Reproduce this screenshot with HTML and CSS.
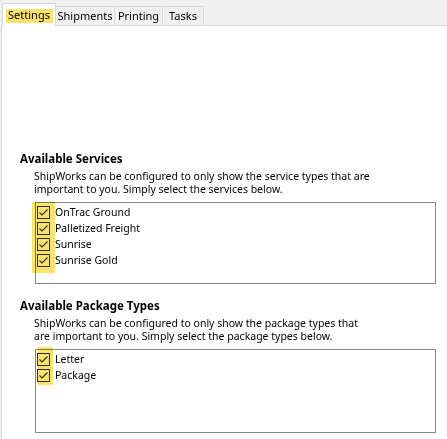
FILE: index.html
```
<!DOCTYPE html>
<html>
<head>
<meta charset="utf-8">
<link rel="stylesheet" href="styles.css">
</head>
<body>
<div class="tabs">
  <div class="tab active tab-settings"><span class="hl hl-tab"></span>Settings</div>
  <div class="tab tab-shipments">Shipments</div>
  <div class="tab tab-printing">Printing</div>
  <div class="tab tab-tasks">Tasks</div>
</div>
<div class="panel">
  <div class="section first">
    <div class="title">Available Services</div>
    <div class="desc">ShipWorks can be configured to only show the service types that are<br>important to you. Simply select the services below.</div>
    <div class="list list-services">
      <span class="hl hl-services"></span>
      <div class="item"><svg class="cb" width="13" height="13" viewBox="0 0 13 13"><rect x="0.5" y="0.5" width="12" height="12" fill="#fff" stroke="#333"/><path d="M2.5 6.5 L5 9 L10.5 3.5" fill="none" stroke="#333" stroke-width="1.1"/></svg><span>OnTrac Ground</span></div>
      <div class="item"><svg class="cb" width="13" height="13" viewBox="0 0 13 13"><rect x="0.5" y="0.5" width="12" height="12" fill="#fff" stroke="#333"/><path d="M2.5 6.5 L5 9 L10.5 3.5" fill="none" stroke="#333" stroke-width="1.1"/></svg><span>Palletized Freight</span></div>
      <div class="item"><svg class="cb" width="13" height="13" viewBox="0 0 13 13"><rect x="0.5" y="0.5" width="12" height="12" fill="#fff" stroke="#333"/><path d="M2.5 6.5 L5 9 L10.5 3.5" fill="none" stroke="#333" stroke-width="1.1"/></svg><span>Sunrise</span></div>
      <div class="item"><svg class="cb" width="13" height="13" viewBox="0 0 13 13"><rect x="0.5" y="0.5" width="12" height="12" fill="#fff" stroke="#333"/><path d="M2.5 6.5 L5 9 L10.5 3.5" fill="none" stroke="#333" stroke-width="1.1"/></svg><span>Sunrise Gold</span></div>
    </div>
  </div>
  <div class="section second">
    <div class="title">Available Package Types</div>
    <div class="desc">ShipWorks can be configured to only show the package types that<br>are important to you. Simply select the package types below.</div>
    <div class="list list-packages">
      <span class="hl hl-packages"></span>
      <div class="item"><svg class="cb" width="13" height="13" viewBox="0 0 13 13"><rect x="0.5" y="0.5" width="12" height="12" fill="#fff" stroke="#333"/><path d="M2.5 6.5 L5 9 L10.5 3.5" fill="none" stroke="#333" stroke-width="1.1"/></svg><span>Letter</span></div>
      <div class="item"><svg class="cb" width="13" height="13" viewBox="0 0 13 13"><rect x="0.5" y="0.5" width="12" height="12" fill="#fff" stroke="#333"/><path d="M2.5 6.5 L5 9 L10.5 3.5" fill="none" stroke="#333" stroke-width="1.1"/></svg><span>Package</span></div>
    </div>
  </div>
</div>
</body>
</html>
```

FILE: styles.css
```
html, body {
  margin: 0;
  padding: 0;
  background: #f0f0f0;
  font-family: "Noto Sans", "Open Sans", sans-serif;
  font-size: 10.5px;
  color: #000;
  height: 439px;
  overflow: hidden;
}

.tabs {
  display: flex;
  align-items: flex-end;
  height: 25px;
  padding-left: 2px;
  background: #f0f0f0;
}

.tab {
  position: relative;
  box-sizing: border-box;
  height: 19px;
  line-height: 18px;
  text-align: center;
  border: 1px solid #d9d9d9;
  border-bottom: none;
  margin-left: -1px;
  background: #f0f0f0;
  white-space: nowrap;
  font-size: 11px;
}

.tab:first-child {
  margin-left: 0;
}

.tab.active {
  height: 23px;
  line-height: 22px;
  background: #fff;
  margin-bottom: -1px;
  z-index: 1;
}

.tab-settings { width: 54px; }
.tab-shipments { width: 60px; }
.tab-printing { width: 49px; }
.tab-tasks { width: 42px; }

.panel {
  margin-left: 1px;
  border-top: 1px solid #d9d9d9;
  border-left: 1px solid #d9d9d9;
  background: #fff;
  height: 414px;
  padding: 125px 0 0 18px;
  box-sizing: border-box;
}

.title {
  font-weight: bold;
  font-size: 11.5px;
  line-height: 16px;
}

.desc {
  margin: 3px 0 0 14px;
  line-height: 13px;
  white-space: nowrap;
}

.list {
  position: relative;
  margin: 6px 0 0 15px;
  width: 401px;
  border: 1px solid #82878f;
  box-sizing: border-box;
  padding-top: 1px;
}

.list-services {
  height: 82px;
}

.list-packages {
  height: 84px;
}

.second {
  margin-top: 14px;
}

.item {
  display: flex;
  align-items: center;
  height: 16px;
  line-height: 16px;
  padding-left: 1px;
  gap: 5px;
  white-space: nowrap;
}

.cb {
  display: block;
  flex: none;
}

.hl {
  position: absolute;
  background: #f8e36c;
  mix-blend-mode: multiply;
  z-index: 2;
}

.hl-tab {
  left: 3px;
  top: 5px;
  width: 47px;
  height: 14px;
}

.hl-services {
  left: -4px;
  top: -1px;
  width: 23px;
  height: 71px;
}

.hl-packages {
  left: 2px;
  top: -3px;
  width: 15px;
  height: 38px;
}
```
